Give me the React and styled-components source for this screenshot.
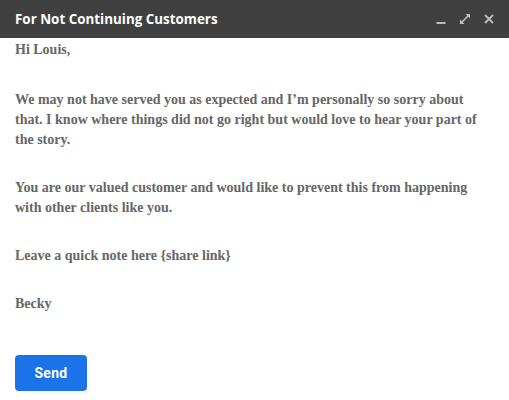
import React from 'react';
import styled, { createGlobalStyle } from 'styled-components';

const GlobalStyle = createGlobalStyle`
  html, body {
    margin: 0;
    padding: 0;
    background: #ffffff;
  }
`;

const Window = styled.div`
  width: 509px;
  height: 400px;
  background: #ffffff;
  display: flex;
  flex-direction: column;
`;

const TitleBar = styled.header`
  height: 38px;
  background: #404040;
  display: flex;
  align-items: center;
  justify-content: space-between;
  padding: 0 15px 0 15px;
  box-sizing: border-box;
`;

const Title = styled.div`
  font-family: 'Open Sans', sans-serif;
  font-weight: 700;
  font-size: 13.4px;
  color: #ffffff;
`;

const Controls = styled.div`
  display: flex;
  align-items: center;
  gap: 14px;
`;

const IconBtn = styled.span`
  width: 10px;
  height: 10px;
  display: flex;
  color: #bdbdbd;
  svg {
    width: 10px;
    height: 10px;
  }
`;

const Body = styled.main`
  padding: 2px 15px 0;
  font-family: 'Liberation Serif', 'Times New Roman', serif;
  font-weight: 700;
  font-size: 14px;
  line-height: 20px;
  color: #666666;
`;

const Para = styled.p`
  margin: 0 0 28px;
  &:first-child {
    margin-bottom: 30px;
  }
`;

const SendButton = styled.button`
  margin: 13px 0 0 15px;
  width: 72px;
  height: 36px;
  border: none;
  border-radius: 4px;
  background: #1a73e8;
  color: #ffffff;
  font-family: Roboto, 'Open Sans', sans-serif;
  font-weight: 700;
  font-size: 14px;
  letter-spacing: 0.3px;
  cursor: pointer;
`;

const App = () => (
  <Window>
    <GlobalStyle />
    <TitleBar>
      <Title>For Not Continuing Customers</Title>
      <Controls>
        <IconBtn>
          <svg viewBox="0 0 10 10">
            <rect x="0.5" y="8" width="9" height="2" fill="currentColor" />
          </svg>
        </IconBtn>
        <IconBtn>
          <svg viewBox="0 0 10 10" fill="currentColor">
            <polygon points="5.5,0 10,0 10,4.5" />
            <polygon points="0,5.5 0,10 4.5,10" />
            <line x1="8.5" y1="1.5" x2="1.5" y2="8.5" stroke="currentColor" strokeWidth="1.6" />
          </svg>
        </IconBtn>
        <IconBtn>
          <svg viewBox="0 0 10 10">
            <path d="M1 1 L9 9 M9 1 L1 9" stroke="currentColor" strokeWidth="1.8" />
          </svg>
        </IconBtn>
      </Controls>
    </TitleBar>
    <Body>
      <Para>Hi Louis,</Para>
      <Para>
        We may not have served you as expected and I’m personally so sorry about
        that. I know where things did not go right but would love to hear your part of
        the story.
      </Para>
      <Para>
        You are our valued customer and would like to prevent this from happening
        with other clients like you.
      </Para>
      <Para>Leave a quick note here {'{share link}'}</Para>
      <Para>Becky</Para>
    </Body>
    <SendButton>Send</SendButton>
  </Window>
);

export default App;
